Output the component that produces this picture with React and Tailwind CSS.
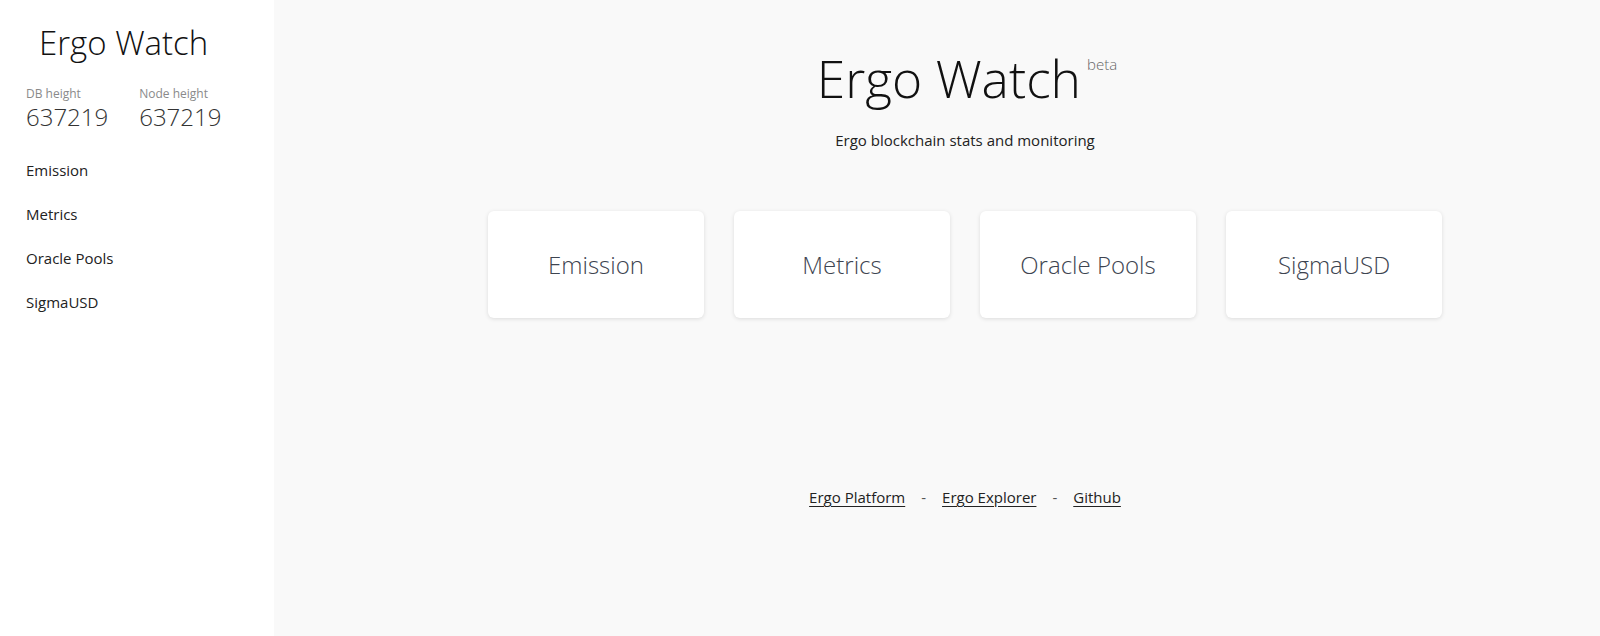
import React from "react";

const font = { fontFamily: '"Open Sans", sans-serif' };

export default function App() {
  const cards = ["Emission", "Metrics", "Oracle Pools", "SigmaUSD"];
  return (
    <div className="flex min-h-[636px] w-full bg-[#f9f9f9] text-[#212529]" style={font}>
      <aside className="w-[274px] shrink-0 bg-white px-[26px] pt-[19px]">
        <div className="pl-[13px] text-[33px] font-light leading-[48px] text-[#111]">Ergo Watch</div>
        <div className="mt-[19px] flex gap-[31px]">
          <div>
            <div className="text-[12px] leading-[16px] text-[#8a8a8a]">DB height</div>
            <div className="text-[24px] font-light leading-[30px] text-[#333]">637219</div>
          </div>
          <div>
            <div className="text-[12px] leading-[16px] text-[#8a8a8a]">Node height</div>
            <div className="text-[24px] font-light leading-[30px] text-[#333]">637219</div>
          </div>
        </div>
        <nav className="mt-[16px] flex flex-col">
          {cards.map((c) => (
            <a key={c} className="py-[11px] text-[15px] leading-[22px] text-[#222]">{c}</a>
          ))}
        </nav>
      </aside>
      <main className="flex flex-1 flex-col items-center pl-[60px] pt-[44px]">
        <div className="flex items-start">
          <h1 className="text-[51.5px] font-light leading-[68px] text-[#111]">Ergo Watch</h1>
          <span className="ml-[6px] mt-[10px] text-[15px] font-light leading-[20px] text-[#666]">beta</span>
        </div>
        <p className="mt-[17px] -translate-x-[2px] text-[15px] leading-[22px] text-[#222]">Ergo blockchain stats and monitoring</p>
        <div className="mt-[60px] flex -translate-x-[2px] gap-[30px]">
          {cards.map((c) => (
            <div
              key={c}
              className="flex h-[107px] w-[216px] items-center justify-center rounded-[6px] bg-white text-[24px] font-light text-[#3d4450] shadow-[0_1px_4px_rgba(0,0,0,0.12)]"
            >
              {c}
            </div>
          ))}
        </div>
        <div className="mt-[168px] flex -translate-x-[2px] items-center gap-[16px] text-[15px] leading-[22px] text-[#222]">
          <a className="underline underline-offset-[3px]">Ergo Platform</a>
          <span className="text-[#555]">-</span>
          <a className="underline underline-offset-[3px]">Ergo Explorer</a>
          <span className="text-[#555]">-</span>
          <a className="underline underline-offset-[3px]">Github</a>
        </div>
      </main>
    </div>
  );
}
